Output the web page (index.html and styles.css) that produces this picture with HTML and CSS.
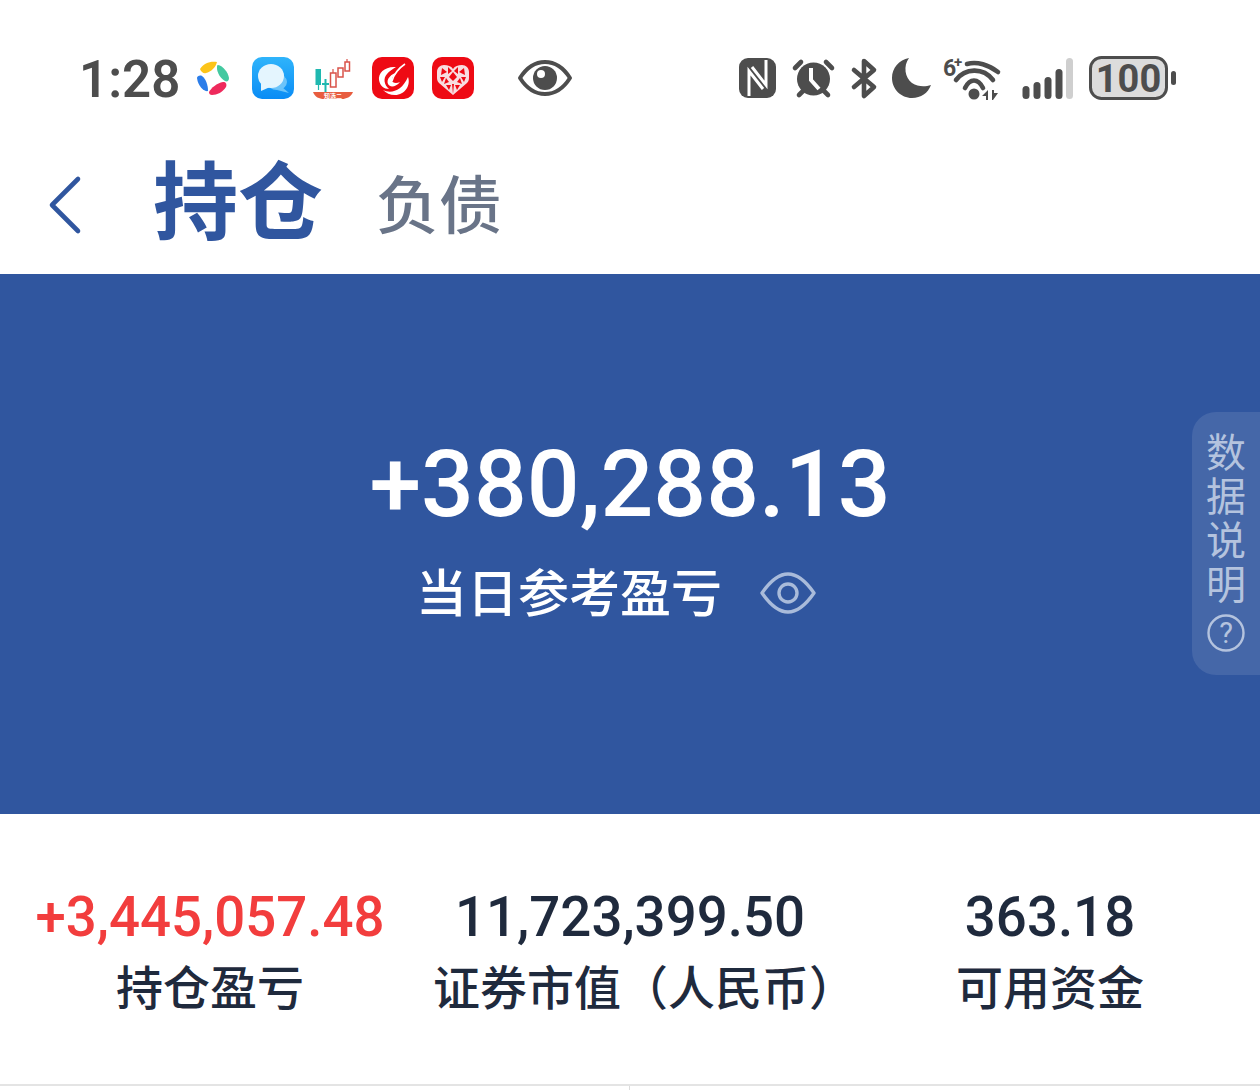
FILE: index.html
```html
<!DOCTYPE html>
<html>
<head>
  <meta charset="utf-8">
  <title>持仓</title>
  <link rel="stylesheet" href="styles.css">
</head>
<body>
  <!-- status bar -->
  <div class="status">
    <div class="status-left">
      <span class="time">1:28</span>
      <svg class="ic-pin" width="34" height="34" viewBox="0 0 34 34">
        <path d="M4 8C8 2 14 0 21 1C20 6 15 11 10 12C8 13 5 11 4 8Z" fill="#fcc419"/>
        <path d="M22 4C27 5 32 11 33 17C33 20 31 21 29 20C25 18 21 12 21 7C21 5 21 4 22 4Z" fill="#43c9a0"/>
        <path d="M13 31C15 27 21 22 27 21C30 21 31 23 30 26C27 31 21 34 16 34C14 34 13 33 13 31Z" fill="#ee2a5c"/>
        <path d="M1 17C1 15 4 14 6 15C10 18 12 24 12 30C9 31 2 26 1 17Z" fill="#2b7de9"/>
      </svg>
      <svg class="ic-app" width="42" height="42" viewBox="0 0 42 42">
        <defs>
          <linearGradient id="msgbg" x1="0" y1="0" x2="0" y2="1">
            <stop offset="0" stop-color="#2fb4fb"/>
            <stop offset="1" stop-color="#0a8cf5"/>
          </linearGradient>
        </defs>
        <rect width="42" height="42" rx="10" fill="url(#msgbg)"/>
        <ellipse cx="25" cy="25" rx="10" ry="8" fill="#6cc4fa"/>
        <path d="M30 30L37 36L25 33Z" fill="#6cc4fa"/>
        <ellipse cx="19" cy="19" rx="13" ry="12" fill="#e4f5fe"/>
        <path d="M9 26L9 34L18 30Z" fill="#e4f5fe"/>
      </svg>
      <svg class="ic-app" width="42" height="42" viewBox="0 0 42 42">
        <path d="M6.5 12V33" stroke="#1fb8b0" stroke-width="1.2"/>
        <rect x="3.5" y="12" width="5.5" height="16" fill="#1fb8b0"/>
        <path d="M13.5 22V35M10 27H17" stroke="#1fb8b0" stroke-width="2" fill="none"/>
        <rect x="18.5" y="16" width="5.5" height="14" fill="none" stroke="#d9534a" stroke-width="1.5"/>
        <path d="M21 12V16M35 2V5" stroke="#d9534a" stroke-width="1.2"/>
        <rect x="26" y="11" width="5" height="9" fill="none" stroke="#d9534a" stroke-width="1.5"/>
        <rect x="33" y="5" width="4.5" height="9" fill="none" stroke="#d9534a" stroke-width="1.5"/>
        <path d="M1 35H41C39 40 34 42 30 42H12C7 42 3 40 1 35Z" fill="#e85d3f"/>
        <text class="mini" x="21" y="41">知选二</text>
      </svg>
      <svg class="ic-app" width="42" height="42" viewBox="0 0 42 42">
        <rect width="42" height="42" rx="10" fill="#ee0a14"/>
        <path d="M33 7C27 11 22 17 20 24" stroke="#fff" stroke-width="1.6" fill="none"/>
        <path d="M24 10C13 9 6 16 7 23C8 29 12 32 17 32C12 28 11 21 15 17C17 14 21 12 24 10Z" fill="#fff"/>
        <path d="M26 15C19 17 14 22 16 27C18 31 24 30 28 25C24 27 20 26 20 23C20 20 23 17 26 15Z" fill="#fff"/>
        <path d="M11 33C19 37 30 34 36 20C39 28 33 38 23 38C18 38 14 36 11 33Z" fill="#fff"/>
      </svg>
      <svg class="ic-app" width="42" height="42" viewBox="0 0 42 42">
        <rect width="42" height="42" rx="10" fill="#ee0a14"/>
        <path d="M21 38L7 26C5 24 5 22 5 20V15C5 11 8 8 12 8C16 8 19 9 21 12C23 9 26 8 30 8C34 8 37 11 37 15V20C37 22 37 24 35 26Z" fill="#f8dde0"/>
        <path d="M10 11L15 15L9 18ZM16 10L20 14L16 17ZM32 11L27 15L33 18ZM26 10L22 14L26 17ZM21 15L25 20L21 24L17 20ZM8 20L13 20L10 25ZM34 20L29 20L32 25ZM14 21L17 25L12 27ZM28 21L25 25L30 27ZM14 28L19 28L17 33ZM28 28L23 28L25 33ZM20 27L22 27L21 37Z" fill="#ee0a14"/>
      </svg>
      <svg class="ic-eye" width="54" height="36" viewBox="0 0 54 36">
        <path d="M2 18C9 7 17 2 27 2C37 2 45 7 52 18C45 29 37 34 27 34C17 34 9 29 2 18Z" fill="none" stroke="#4d4d4d" stroke-width="4" stroke-linejoin="round"/>
        <circle cx="27" cy="18" r="12" fill="#4d4d4d"/>
        <circle cx="23" cy="14" r="4" fill="#fff"/>
      </svg>
    </div>
    <div class="status-right">
      <svg width="37" height="40" viewBox="0 0 37 40">
        <rect width="37" height="40" rx="9" fill="#4d4d4d"/>
        <path d="M10 38V13L24 31M27 2V27L13 9" fill="none" stroke="#fff" stroke-width="3"/>
      </svg>
      <svg width="43" height="40" viewBox="0 0 43 40">
        <path d="M3 10L9 4M40 10L34 4M7 37L11 33M36 37L32 33" stroke="#4d4d4d" stroke-width="4.6" stroke-linecap="round"/>
        <circle cx="21.5" cy="21" r="16.5" fill="#4d4d4d"/>
        <path d="M19 10V22L27 31" fill="none" stroke="#fff" stroke-width="4"/>
      </svg>
      <svg width="26" height="41" viewBox="0 0 26 41">
        <path d="M3 12L23 29L13 38V3L23 12L3 29" fill="none" stroke="#4d4d4d" stroke-width="4.6" stroke-linecap="round" stroke-linejoin="round"/>
      </svg>
      <svg class="ic-moon" width="39" height="40" viewBox="0 0 39 40">
        <path d="M17 0C11 8 13 20 20 25C26 29 33 29 39 27C36 35 29 40 20 40C9 40 0 31 0 20C0 10 7 2 17 0Z" fill="#4d4d4d"/>
      </svg>
      <svg class="ic-wifi" width="57" height="43" viewBox="0 0 57 43">
        <text class="six" x="0" y="19">6</text>
        <text class="plus" x="11" y="10">+</text>
        <path d="M24 7C34 4 46 8 55 15M13 23C22 11 40 10 50 23M22 31C27 21 35 21 40 31" fill="none" stroke="#4d4d4d" stroke-width="4.6" stroke-linecap="round"/>
        <circle cx="31" cy="37" r="5.5" fill="#4d4d4d"/>
        <path d="M39 39L45 33V43H43V39ZM49 33H51V36L55 36L50 43H49Z" fill="#4d4d4d"/>
      </svg>
      <svg class="ic-signal" width="51" height="41" viewBox="0 0 51 41">
        <rect x="0.5" y="28" width="7" height="13" rx="3.5" fill="#4d4d4d"/>
        <rect x="11.5" y="24" width="7" height="17" rx="3.5" fill="#4d4d4d"/>
        <rect x="22.5" y="19" width="7" height="22" rx="3.5" fill="#4d4d4d"/>
        <rect x="33.5" y="11" width="7" height="30" rx="3.5" fill="#4d4d4d"/>
        <rect x="44" y="0" width="7" height="41" rx="3.5" fill="#cfcfcf"/>
      </svg>
      <svg width="87" height="44" viewBox="0 0 87 44">
        <rect x="1.5" y="1.5" width="76" height="41" rx="11" fill="#dcdcdc" stroke="#4d4d4d" stroke-width="3"/>
        <text class="batt-num" x="39.5" y="36">100</text>
        <rect x="82" y="15" width="5" height="14" rx="2.5" fill="#4d4d4d"/>
      </svg>
    </div>
  </div>

  <!-- tabs -->
  <div class="nav">
    <svg class="back" width="34" height="58" viewBox="0 0 34 58">
      <path d="M30 3L4 29L30 55" fill="none" stroke="#30569f" stroke-width="4.6" stroke-linecap="round" stroke-linejoin="round"/>
    </svg>
    <span class="tab-on">持仓</span>
    <span class="tab-off">负债</span>
  </div>

  <div class="hero">
    <div class="hero-num">+380,288.13</div>
    <div class="hero-label">
      <span>当日参考盈亏</span>
      <svg width="56" height="44" viewBox="0 0 56 44">
        <path d="M2 22C11 9 19 3 28 3C37 3 45 9 54 22C45 35 37 41 28 41C19 41 11 35 2 22Z" fill="none" stroke="#a9bbda" stroke-width="3.4" stroke-linejoin="round"/>
        <circle cx="28" cy="22" r="9" fill="none" stroke="#a9bbda" stroke-width="3.4"/>
      </svg>
    </div>
    <div class="side-tab">
      <span>数</span><span>据</span><span>说</span><span>明</span>
      <svg width="38" height="38" viewBox="0 0 38 38">
        <circle cx="19" cy="19" r="17.5" fill="none" stroke="#b4c3de" stroke-width="2.4"/>
        <text class="help" x="19" y="29">?</text>
      </svg>
    </div>
  </div>

  <div class="stats">
    <div class="stat">
      <div class="stat-num red">+3,445,057.48</div>
      <div class="stat-label">持仓盈亏</div>
    </div>
    <div class="stat">
      <div class="stat-num">11,723,399.50</div>
      <div class="stat-label shifted">证券市值（人民币）</div>
    </div>
    <div class="stat">
      <div class="stat-num">363.18</div>
      <div class="stat-label">可用资金</div>
    </div>
  </div>

  <div class="bottom">
    <div class="bottom-cell"></div>
    <div class="bottom-cell"></div>
  </div>
</body>
</html>
```

FILE: styles.css
```css
html, body {
  margin: 0;
  padding: 0;
}

body {
  width: 1260px;
  height: 1090px;
  overflow: hidden;
  background-color: #fff;
  font-family: Roboto, "Noto Sans CJK SC", sans-serif;
}

svg {
  overflow: visible;
}

.status {
  display: flex;
  justify-content: space-between;
  align-items: center;
  height: 140px;
  padding: 16px 84px 0 80px;
  box-sizing: border-box;
}

.status-left, .status-right {
  display: flex;
  align-items: center;
}

.status-right {
  gap: 16px;
}

.time {
  font-size: 51px;
  font-weight: 600;
  color: #4d4d4d;
  width: 98px;
  margin: 3px 18px 0 -1px;
}

.ic-pin {
  margin-left: 1px;
  margin-right: 22px;
}

.ic-app {
  margin-right: 18px;
}

.ic-eye {
  margin-left: 26px;
}

.ic-moon {
  margin-left: -1px;
}

.ic-wifi {
  margin-left: -4px;
}

.ic-signal {
  margin-left: 6px;
}

.mini {
  font-size: 6px;
  font-weight: 700;
  fill: #fff;
  text-anchor: middle;
}

.six {
  font-size: 23px;
  font-weight: 700;
  fill: #4d4d4d;
}

.plus {
  font-size: 15px;
  font-weight: 700;
  fill: #4d4d4d;
}

.batt-num {
  font-size: 38px;
  font-weight: 700;
  fill: #4d4d4d;
  text-anchor: middle;
}

.nav {
  display: flex;
  align-items: center;
  height: 134px;
  padding: 0 0 4px 48px;
  box-sizing: border-box;
}

.back {
  margin-right: 71px;
}

.tab-on {
  font-size: 85px;
  font-weight: 700;
  color: #30569f;
  margin: 0 53px 20px 0;
}

.tab-off {
  font-size: 63px;
  font-weight: 500;
  color: #697488;
  margin-bottom: 9px;
}

.hero {
  position: relative;
  display: flex;
  flex-direction: column;
  align-items: center;
  justify-content: center;
  height: 540px;
  padding-bottom: 28px;
  box-sizing: border-box;
  background-color: #30569f;
  color: #fff;
}

.hero-num {
  font-size: 93px;
  font-weight: 500;
  line-height: 110px;
}

.hero-label {
  display: flex;
  align-items: center;
  gap: 38px;
  font-size: 51px;
  font-weight: 500;
  line-height: 70px;
  margin-top: 20px;
  padding-right: 28px;
}

.hero-label svg {
  margin-bottom: 4px;
}

.side-tab {
  position: absolute;
  right: 0;
  top: 138px;
  width: 68px;
  height: 263px;
  box-sizing: border-box;
  padding-top: 20px;
  display: flex;
  flex-direction: column;
  align-items: center;
  background-color: rgba(255, 255, 255, 0.1);
  border-radius: 24px 0 0 24px;
  color: #b4c3de;
  font-size: 40px;
  line-height: 44px;
}

.side-tab svg {
  margin-top: 6px;
}

.help {
  font-size: 29px;
  fill: #b4c3de;
  text-anchor: middle;
}

.stats {
  display: grid;
  grid-template-columns: repeat(3, minmax(0, 1fr));
  height: 270px;
  padding-top: 68px;
  box-sizing: border-box;
  text-align: center;
}

.stat-num {
  font-size: 54.6px;
  font-weight: 500;
  line-height: 70px;
  color: #1f2a3d;
}

.stat-num.red {
  color: #f23d3d;
}

.stat-label {
  font-size: 47px;
  font-weight: 500;
  line-height: 72px;
  margin-top: 1px;
  color: #1f2a3d;
}

.stat-label.shifted {
  padding-left: 13px;
  white-space: nowrap;
}

.bottom {
  display: grid;
  grid-template-columns: 1fr 1fr;
  height: 6px;
  border-top: 2px solid #e4e4e4;
}

.bottom-cell:first-child {
  border-right: 1px solid #dcdcdc;
}
```
